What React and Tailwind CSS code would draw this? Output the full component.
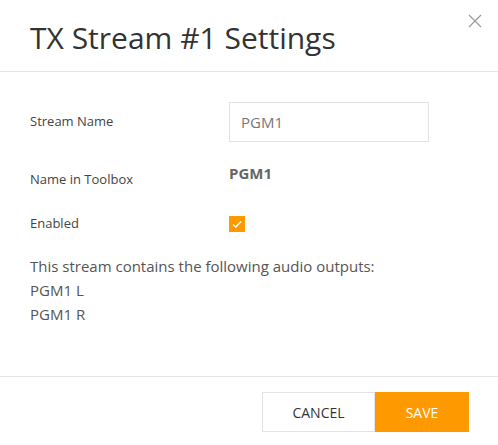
import React, { useState } from "react";

const App = () => {
  const [name, setName] = useState("PGM1");
  const [enabled, setEnabled] = useState(true);
  const outputs = ["PGM1 L", "PGM1 R"];

  return (
    <div
      className="w-[498px] h-[445px] bg-white relative text-[#444]"
      style={{ fontFamily: '"Open Sans", "Noto Sans", sans-serif' }}
    >
      {/* Header */}
      <div className="h-[72px] border-b border-[#e5e5e5] px-[30px] pt-[16px]">
        <h1 className="text-[30px] leading-[44px] text-[#333] font-normal">
          TX Stream #1 Settings
        </h1>
      </div>
      <button className="absolute right-[16px] top-[14px] w-[14px] h-[14px] text-[#9a9a9a]">
        <svg viewBox="0 0 14 14" className="w-full h-full" fill="none" stroke="currentColor" strokeWidth="1.2">
          <path d="M1 1L13 13M13 1L1 13" />
        </svg>
      </button>

      {/* Body */}
      <div className="h-[304px] px-[30px] pt-[30px]">
        <div className="flex items-center h-[40px]">
          <label className="w-[199px] text-[13px]">Stream Name</label>
          <input
            value={name}
            onChange={(e) => setName(e.target.value)}
            className="w-[200px] h-[40px] border border-[#e3e3e3] px-[11px] text-[15px] text-[#777] outline-none"
          />
        </div>

        <div className="flex h-[30px] mt-[20px]">
          <span className="w-[199px] text-[13px] pt-[8px]">Name in Toolbox</span>
          <span className="text-[15px] font-bold text-[#666] leading-[22px]">PGM1</span>
        </div>

        <div className="flex items-center h-[16px] mt-[24px]">
          <span className="w-[199px] text-[13px]">Enabled</span>
          <button
            onClick={() => setEnabled(!enabled)}
            className="w-[16px] h-[16px] bg-[#ff9900] flex items-center justify-center"
          >
            {enabled && (
              <svg viewBox="0 0 16 16" className="w-[16px] h-[16px]" fill="none" stroke="white" strokeWidth="1.5">
                <path d="M4 8.5L6.8 11L12 5.5" />
              </svg>
            )}
          </button>
        </div>

        <div className="mt-[22px] text-[15px] leading-[24px] text-[#555]">
          <p>This stream contains the following audio outputs:</p>
          {outputs.map((o) => (
            <p key={o}>{o}</p>
          ))}
        </div>
      </div>

      {/* Footer */}
      <div className="border-t border-[#e5e5e5] flex justify-end pr-[29px] pt-[15px]">
        <button className="w-[113px] h-[40px] border border-[#e3e3e3] text-[14px] text-[#333] uppercase">
          Cancel
        </button>
        <button className="w-[94px] h-[40px] bg-[#ff9900] text-[14px] text-white uppercase">
          Save
        </button>
      </div>
    </div>
  );
};

export default App;
